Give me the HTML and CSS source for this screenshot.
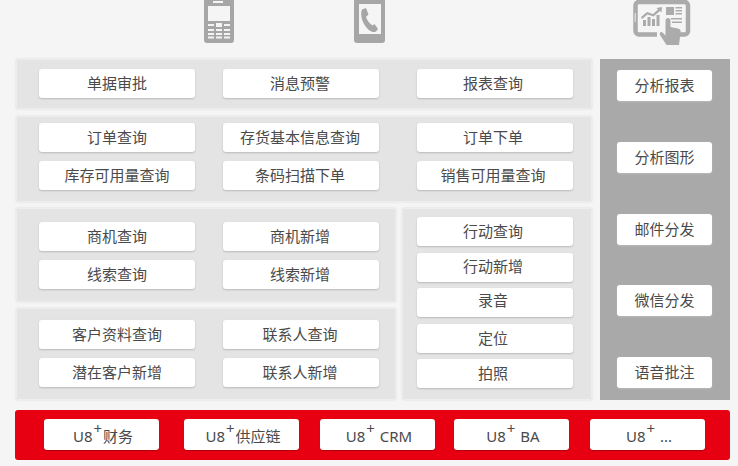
FILE: index.html
```html
<!DOCTYPE html>
<html lang="zh-CN">
<head>
<meta charset="utf-8">
<title>U8+</title>
<link rel="stylesheet" href="styles.css">
</head>
<body>
<div class="page">
  <header class="devices">
    <svg class="icon icon-phone" width="30" height="44" viewBox="0 0 30 44">
      <path fill="#a6a6a6" fill-rule="evenodd" d="M3-2H27a3 3 0 0 1 3 3V40a3 3 0 0 1-3 3H3a3 3 0 0 1-3-3V1A3 3 0 0 1 3-2ZM4 6V21H26V6ZM9 1V3H19V1ZM4 24V26H10V24ZM12 23V27H18V23ZM20 24V26H26V24ZM4 29V31H10V29ZM12 29V31H18V29ZM20 29V31H26V29ZM4 33V35H10V33ZM12 33V35H18V33ZM20 33V35H26V33ZM4 36.500V38.500H10V36.500ZM12 36.500V38.500H18V36.500ZM20 36.500V38.500H26V36.500Z"/>
    </svg>
    <svg class="icon icon-call" width="31" height="44" viewBox="0 0 31 44">
      <path fill="#a6a6a6" fill-rule="evenodd" d="M3-2H28a3 3 0 0 1 3 3V40a3 3 0 0 1-3 3H3a3 3 0 0 1-3-3V1A3 3 0 0 1 3-2ZM5 4V34H27V4Z"/>
      <path fill="#a6a6a6" d="M8 9.500 12 8 14.500 14.500 12 17C13 20.500 15.500 23.500 18.500 25.500L20.500 24 24 29 22 31.500C18.500 33.500 14 30 11 25.500 8 21 6 14 8 9.500Z"/>
    </svg>
    <svg class="icon icon-tablet" width="58" height="46" viewBox="0 0 58 46">
      <path fill="none" stroke="#ababab" stroke-width="4.500" d="M24 34.500H6A3.500 3.500 0 0 1 2.500 31V5.500A3.500 3.500 0 0 1 6 2H51.500A3.500 3.500 0 0 1 55 5.500V31A3.500 3.500 0 0 1 51.500 34.500H47"/>
      <path fill="#d6d6d6" d="M1.500 13H3V22H1.500Z"/>
      <path fill="#ababab" d="M8 17 14 12 20 14 25 9.500 23.500 8 29 7 28.500 12.500 27 11 20.500 16.500 14.500 14.500 9 19ZM10 20H13V26H10ZM14.500 17H17.500V26H14.500ZM19 19H22V26H19ZM23.500 15H26.500V26H23.500ZM33 7H41V15H33ZM42.500 7H49V8.500H42.500ZM42.500 10H49V11.500H42.500ZM42.500 13H49V14.500H42.500ZM38 18H49V19.500H38ZM39 21.500H49V23H39Z"/>
      <path fill="#ababab" d="M32.500 20.500A2.500 2.500 0 0 1 37.500 20.500V27L45 28.500C47.500 29 48 31 47.500 33L46 45H33.500L27 35C26 32.500 28.500 31 30 33L32.500 35.500Z"/>
    </svg>
  </header>

  <main class="board">
    <div class="left">
      <section class="panel panel-approve">
        <div class="grid-three">
          <div class="btn">单据审批</div>
          <div class="btn">消息预警</div>
          <div class="btn">报表查询</div>
        </div>
      </section>
      <section class="panel panel-order">
        <div class="grid-three">
          <div class="btn">订单查询</div>
          <div class="btn">存货基本信息查询</div>
          <div class="btn">订单下单</div>
          <div class="btn">库存可用量查询</div>
          <div class="btn">条码扫描下单</div>
          <div class="btn">销售可用量查询</div>
        </div>
      </section>
      <div class="lower">
        <div class="lower-left">
          <section class="panel panel-lead">
            <div class="grid-two">
              <div class="btn">商机查询</div>
              <div class="btn">商机新增</div>
              <div class="btn">线索查询</div>
              <div class="btn">线索新增</div>
            </div>
          </section>
          <section class="panel panel-customer">
            <div class="grid-two">
              <div class="btn">客户资料查询</div>
              <div class="btn">联系人查询</div>
              <div class="btn">潜在客户新增</div>
              <div class="btn">联系人新增</div>
            </div>
          </section>
        </div>
        <section class="panel panel-action">
          <div class="btn">行动查询</div>
          <div class="btn lifted">行动新增</div>
          <div class="btn raised">录音</div>
          <div class="btn">定位</div>
          <div class="btn">拍照</div>
        </section>
      </div>
    </div>
    <aside class="side">
      <div class="btn btn-side">分析报表</div>
      <div class="btn btn-side">分析图形</div>
      <div class="btn btn-side">邮件分发</div>
      <div class="btn btn-side">微信分发</div>
      <div class="btn btn-side">语音批注</div>
    </aside>
  </main>

  <footer class="products">
    <div class="btn btn-product"><span>U8<sup class="plus">+</sup>财务</span></div>
    <div class="btn btn-product second"><span>U8<sup class="plus">+</sup>供应链</span></div>
    <div class="btn btn-product third"><span>U8<sup class="plus">+</sup> CRM</span></div>
    <div class="btn btn-product fourth"><span>U8<sup class="plus">+</sup> BA</span></div>
    <div class="btn btn-product fifth"><span>U8<sup class="plus">+</sup> ...</span></div>
  </footer>
</div>
</body>
</html>
```

FILE: styles.css
```css
* { box-sizing: border-box; }

html, body {
  margin: 0;
  height: 466px;
  overflow: hidden;
  background: #f5f5f5;
}

body {
  font-family: "Noto Sans", "Noto Sans CJK SC", sans-serif;
  font-size: 15px;
  color: #4a4a4a;
}

.page { width: 738px; height: 466px; }

.devices {
  display: flex;
  height: 59px;
  padding-left: 204px;
}

.icon { display: block; flex: none; }
.icon-call { margin-left: 120px; }
.icon-tablet { margin-left: 248px; }

.board {
  display: flex;
  gap: 8px;
  height: 341px;
  margin-left: 16px;
}

.left {
  display: flex;
  flex-direction: column;
  flex: none;
  width: 576px;
}

.panel {
  flex: none;
  background: #e4e4e4;
  border: 1px solid #ededed;
  border-radius: 2px;
  box-shadow: 0 0 2px #d4d4d4;
}

.panel-approve { height: 50px; padding: 9px 0 0 22px; }
.panel-order { height: 86px; margin-top: 7px; padding: 6px 0 0 22px; }
.panel-lead { height: 94px; padding: 13px 0 0 22px; }
.panel-customer { height: 92px; margin-top: 6px; padding: 11px 0 0 22px; }

.grid-three {
  display: grid;
  grid-template-columns: 184px 194px 156px;
  row-gap: 9px;
}

.grid-three .btn { width: 156px; }
.grid-three .btn:nth-child(3n+2) { padding-right: 2px; }
.grid-three .btn:nth-child(3n) { padding-right: 4px; }

.grid-two {
  display: grid;
  grid-template-columns: 156px 156px;
  column-gap: 28px;
  row-gap: 9px;
}

.grid-two .btn:nth-child(2n) { padding-right: 2px; }

.lower {
  display: flex;
  gap: 6px;
  margin-top: 6px;
}

.lower-left { flex: none; width: 380px; }

.panel-action {
  display: flex;
  flex-direction: column;
  justify-content: space-between;
  width: 190px;
  height: 192px;
  padding: 8px 18px 11px 14px;
}

.panel-action .btn { padding-right: 4px; }
.panel-action .lifted { padding-bottom: 2px; }
.panel-action .raised { padding-bottom: 4px; }

.btn {
  display: flex;
  align-items: center;
  justify-content: center;
  height: 29px;
  background: #fff;
  border-radius: 3px;
  box-shadow: 0 1px 2px #b9b9b9;
  white-space: pre;
  line-height: 1;
}

.side {
  display: flex;
  flex-direction: column;
  justify-content: space-between;
  width: 130px;
  padding: 11px 18px 12px 17px;
  background: #a9a9a9;
}

.btn-side { height: 31px; }

.products {
  display: flex;
  align-items: center;
  width: 715px;
  height: 50px;
  margin: 10px 0 0 15px;
  padding: 0 0 1px 29px;
  background: #e60012;
  border-radius: 3px;
}

.btn-product {
  width: 115px;
  height: 31px;
  padding: 3px 0 0 3px;
  box-shadow: 0 1px 1px #b0000c;
}

.second { margin-left: 25px; }
.third { margin-left: 21px; }
.fourth { margin-left: 19px; }
.fifth { margin-left: 21px; }

.plus {
  position: relative;
  top: -8px;
  margin: 0 1px;
  font-size: 15px;
  line-height: 0;
  vertical-align: baseline;
}
```
